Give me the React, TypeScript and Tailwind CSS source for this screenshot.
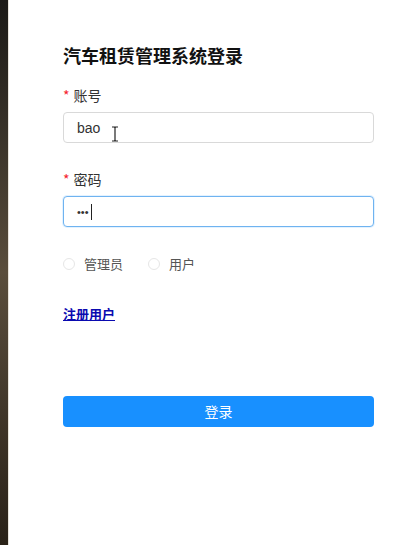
import React from "react";

const font = { fontFamily: '"Noto Sans CJK SC", "Noto Sans", sans-serif' };
const latin = { fontFamily: '"Liberation Sans", Arial, sans-serif' };

function Radio({ label }: { label: string }) {
  return (
    <label className="flex items-center gap-[9px] text-[13px] text-[#555]">
      <span className="block h-[12px] w-[12px] rounded-full border border-[#e6e6e6] bg-white" />
      <span>{label}</span>
    </label>
  );
}

export default function App() {
  return (
    <div className="flex h-[545px] w-[417px] bg-white" style={font}>
      {/* dark backdrop strip on the left edge */}
      <div className="h-full w-[8px] bg-gradient-to-b from-[#1c1a16] via-[#5a4e3c] to-[#2a2218]" />
      <div className="w-px bg-[#e8e4da]" />
      <div className="flex flex-1 flex-col pl-[54px] pr-[43px] pt-[43px]">
        <h1 className="h-[24px] text-[18px] font-bold leading-[24px] text-[#111]">
          汽车租赁管理系统登录
        </h1>

        <div className="mt-[18px] h-[20px] text-[14px] leading-[20px] text-[#333]">
          <span className="mr-[4px] text-[#f5222d]">*</span>账号
        </div>
        <div className="relative mt-[7px] h-[31px] rounded-[4px] border border-[#d9d9d9] bg-white">
          <span className="absolute left-[13px] top-[5px] text-[14px] leading-[20px] text-[#333]" style={latin}>
            bao
          </span>
          {/* mouse I-beam cursor */}
          <svg className="absolute left-[47px] top-[13px]" width="8" height="16" viewBox="0 0 8 16">
            <path d="M1 1h2.5l0.5 1 0.5-1H7M4 2v12M1 15h2.5l0.5-1 0.5 1H7" fill="none" stroke="#222" strokeWidth="1.2" />
          </svg>
        </div>

        <div className="mt-[26px] h-[20px] text-[14px] leading-[20px] text-[#333]">
          <span className="mr-[4px] text-[#f5222d]">*</span>密码
        </div>
        <div className="relative mt-[7px] h-[31px] rounded-[4px] border border-[#6fb3f0] bg-white shadow-[0_0_0_1px_rgba(24,144,255,0.12)]">
          <span className="absolute left-[13px] top-[5px] text-[11px] leading-[20px] text-[#333]" style={latin}>
            •••
          </span>
          <span className="absolute left-[27px] top-[7px] h-[16px] w-px bg-[#222]" />
        </div>

        <div className="mt-[27px] flex h-[20px] items-center gap-[25px]">
          <Radio label="管理员" />
          <Radio label="用户" />
        </div>

        <div className="mt-[30px] h-[20px] text-[13px] leading-[20px]">
          <a href="#" className="font-semibold text-[#0a0ab0] underline">
            注册用户
          </a>
        </div>

        <button className="mt-[72px] h-[31px] w-full rounded-[4px] bg-[#1890ff] text-[14px] text-white">
          登录
        </button>
      </div>
    </div>
  );
}
